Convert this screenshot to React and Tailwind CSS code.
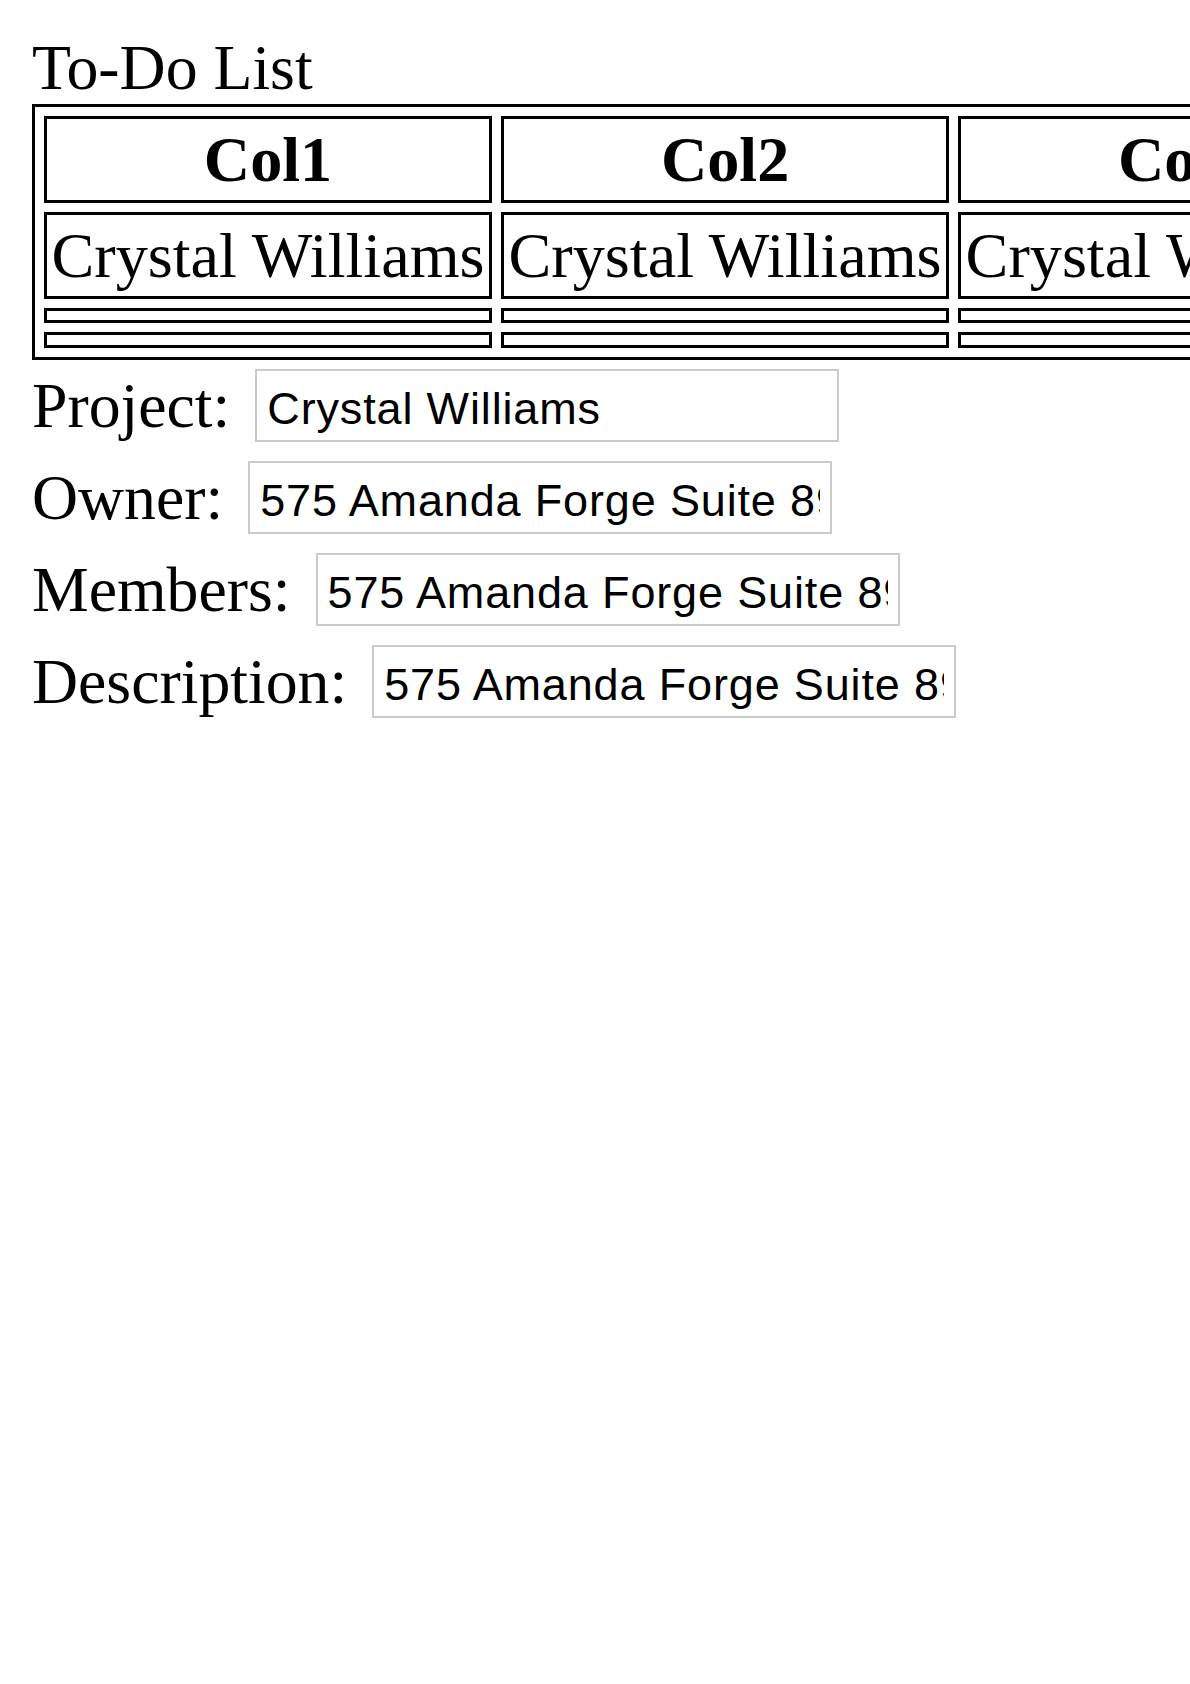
import React from "react";

const serif = { fontFamily: '"Liberation Serif", "Times New Roman", serif' };

function Field({ label, value }) {
  return (
    <div className="flex h-[92px] items-center">
      <span className="text-[63.75px] leading-[72px] text-black" style={serif}>
        {label}
      </span>
      <input
        readOnly
        value={value}
        className="ml-[25px] box-border h-[73px] w-[584px] border-2 border-[#cacaca] bg-white px-[10px] pt-[7px] pb-0 text-[45px] tracking-[0.85px] text-black outline-none [font-family:'Liberation_Sans',Arial,sans-serif]"
      />
    </div>
  );
}

export default function App() {
  const cols = ["Col1", "Col2", "Col3"];
  const name = "Crystal Williams";
  const addr = "575 Amanda Forge Suite 890";
  return (
    <div className="w-full overflow-hidden bg-white">
      <div className="p-[32px] text-black" style={serif}>
        <div className="text-[63.75px] leading-[72px]">To-Do List</div>
        <table className="border-separate border-spacing-[9px] border-[3px] border-black text-[64.2px] leading-[72px]">
          <thead>
            <tr>
              {cols.map((c) => (
                <th key={c} className="border-[3px] border-black p-[4.5px] text-center font-bold whitespace-nowrap">
                  {c}
                </th>
              ))}
            </tr>
          </thead>
          <tbody>
            <tr>
              {cols.map((c) => (
                <td key={c} className="border-[3px] border-black p-[4.5px] whitespace-nowrap">
                  {name}
                </td>
              ))}
            </tr>
            <tr>
              {cols.map((c) => (
                <td key={c} className="border-[3px] border-black p-[4.7px]"></td>
              ))}
            </tr>
            <tr>
              {cols.map((c) => (
                <td key={c} className="border-[3px] border-black p-[4.7px]"></td>
              ))}
            </tr>
          </tbody>
        </table>
        <Field label="Project:" value={name} />
        <Field label="Owner:" value={addr} />
        <Field label="Members:" value={addr} />
        <Field label="Description:" value={addr} />
      </div>
    </div>
  );
}
